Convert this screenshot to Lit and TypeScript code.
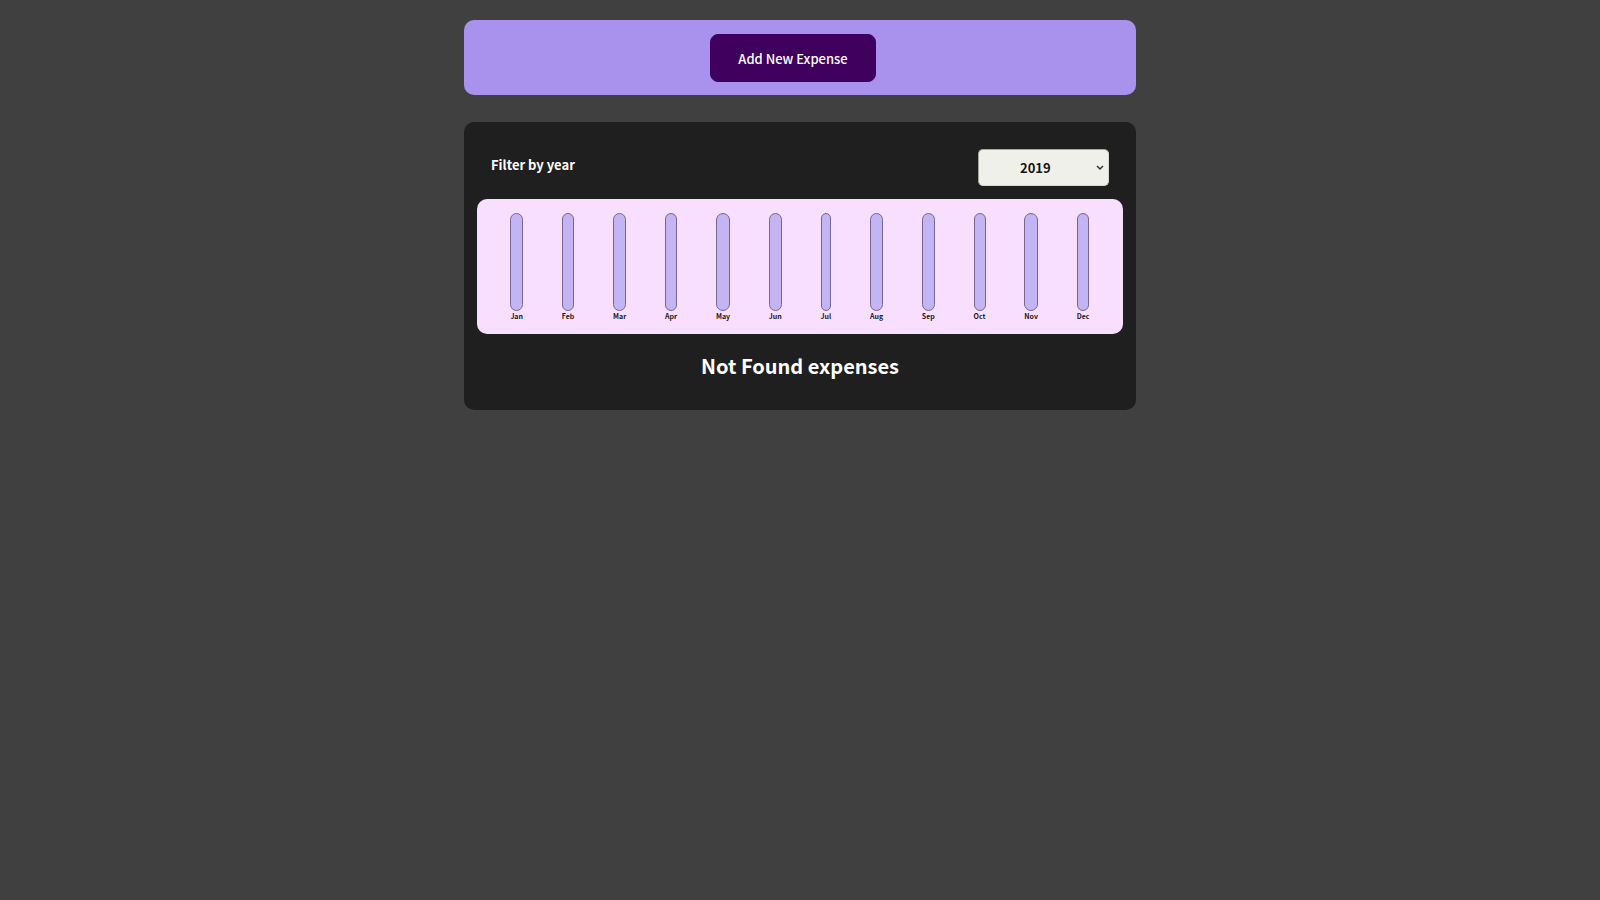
import { LitElement, html, css } from "lit";
import { customElement, property, state } from "lit/decorators.js";

const MONTHS = ["Jan", "Feb", "Mar", "Apr", "May", "Jun", "Jul", "Aug", "Sep", "Oct", "Nov", "Dec"];
const YEARS = ["2022", "2021", "2020", "2019"];

@customElement("expense-chart")
class ExpenseChart extends LitElement {
  @property({ attribute: false }) values: number[] = [];

  static styles = css`
    :host {
      display: block;
    }
    .chart {
      display: flex;
      justify-content: space-around;
      height: 108px;
      padding: 14px 14px 13px;
      border-radius: 10px;
      background: #f8dfff;
    }
    .month {
      display: flex;
      flex-direction: column;
      align-items: center;
    }
    .track {
      box-sizing: border-box;
      display: flex;
      flex: 1;
      flex-direction: column;
      justify-content: flex-end;
      width: 100%;
      overflow: hidden;
      border: 1px solid #75688c;
      border-radius: 10px;
      background: #c3b4f3;
    }
    .fill {
      background: #4826b9;
    }
    .label {
      color: #1b1420;
      font-size: 7px;
      font-weight: 700;
      line-height: 10px;
      text-align: center;
    }
  `;

  render() {
    const max = Math.max(...this.values, 1);
    return html`
      <div class="chart">
        ${MONTHS.map(
          (month, i) => html`
            <div class="month">
              <div class="track">
                <div class="fill" style="height:${((this.values[i] ?? 0) / max) * 100}%"></div>
              </div>
              <div class="label">${month}</div>
            </div>
          `
        )}
      </div>
    `;
  }
}

@customElement("app-root")
class AppRoot extends LitElement {
  @state() private year = "2019";

  static styles = css`
    :host {
      box-sizing: border-box;
      display: block;
      min-height: 100vh;
      padding: 20px 16px;
      background: #404040;
      color: #fff;
      font-family: "Noto Sans CJK JP", "Noto Sans", sans-serif;
    }
    .page {
      display: flex;
      flex-direction: column;
      gap: 27px;
      max-width: 672px;
      margin: 0 auto;
    }
    .new-expense {
      padding: 14px 14px 13px;
      border-radius: 10px;
      background: #a892ee;
      text-align: center;
    }
    .add {
      height: 48px;
      margin: 0 14px 0 0;
      padding: 0 27px;
      border: 1px solid #40005d;
      border-radius: 8px;
      background: #40005d;
      color: #fff;
      font: inherit;
      font-size: 13px;
      font-weight: 500;
      vertical-align: top;
      cursor: pointer;
    }
    .expenses {
      padding: 27px 13px 28px;
      border-radius: 10px;
      background: #1f1f1f;
    }
    .filter {
      display: flex;
      justify-content: space-between;
      padding: 0 14px;
      margin-bottom: 13px;
    }
    .filter-label {
      font-size: 13px;
      font-weight: 700;
      line-height: 31px;
    }
    .year {
      appearance: none;
      width: 131px;
      height: 37px;
      padding: 0 27px 0 41px;
      border: 1px solid #d6d6d2;
      border-top-color: #a4a4a4;
      border-left-color: #a4a4a4;
      border-radius: 5px;
      background: #f0f0ea
        url("data:image/svg+xml,%3Csvg xmlns='http://www.w3.org/2000/svg' width='8' height='6' viewBox='0 0 8 6'%3E%3Cpath d='M1 1l3 3 3-3' fill='none' stroke='%23333' stroke-width='1.5'/%3E%3C/svg%3E")
        no-repeat right 4px center;
      color: #141414;
      font: inherit;
      font-size: 13px;
      font-weight: 700;
    }
    .empty {
      margin: 16px 0 0;
      font-size: 20px;
      font-weight: 700;
      line-height: 32px;
      text-align: center;
    }
  `;

  render() {
    return html`
      <main class="page">
        <section class="new-expense">
          <button class="add" type="button">Add New Expense</button>
        </section>
        <section class="expenses">
          <div class="filter">
            <label class="filter-label" for="year">Filter by year</label>
            <select
              class="year"
              id="year"
              @change=${(e: Event) => (this.year = (e.target as HTMLSelectElement).value)}
            >
              ${YEARS.map((y) => html`<option value=${y} ?selected=${y === this.year}>${y}</option>`)}
            </select>
          </div>
          <expense-chart></expense-chart>
          <h2 class="empty">Not Found expenses</h2>
        </section>
      </main>
    `;
  }
}
